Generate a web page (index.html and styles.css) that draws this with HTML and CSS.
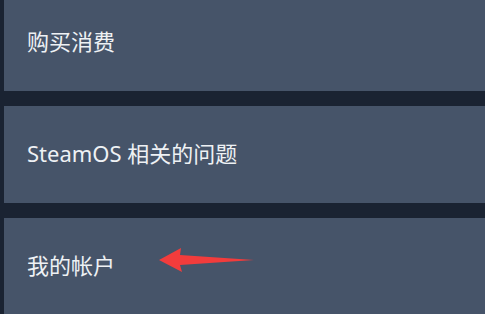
FILE: index.html
```html
<!DOCTYPE html>
<html lang="zh-CN">
<head>
    <meta charset="UTF-8">
    <meta name="viewport" content="width=device-width, initial-scale=1.0">
    <title>Steam 客服</title>
    <link rel="stylesheet" href="styles.css">
</head>
<body>
    <div class="list">
        <div class="item">购买消费</div>
        <div class="item">SteamOS 相关的问题</div>
        <div class="item">
            我的帐户
            <svg class="arrow" width="100" height="30" viewBox="0 0 100 30">
                <path d="M0 12 L22 0 L21 7 L95 12 L21 17 L23 24 Z" fill="#f23c3c"/>
            </svg>
        </div>
    </div>
</body>
</html>
```

FILE: styles.css
```css
body {
    margin: 0;
    background: #1a2332;
    font-family: "Noto Sans", "Noto Sans CJK SC", sans-serif;
    overflow: hidden;
}

.list {
    display: flex;
    flex-direction: column;
    gap: 15px;
    margin-top: -6px;
    padding-left: 4px;
}

.item {
    position: relative;
    height: 97px;
    box-sizing: border-box;
    padding: 0 0 5px 23px;
    display: flex;
    align-items: center;
    background: #465469;
    color: #eef1f4;
    font-size: 22px;
}

.arrow {
    position: absolute;
    left: 155px;
    top: 30px;
}
```
